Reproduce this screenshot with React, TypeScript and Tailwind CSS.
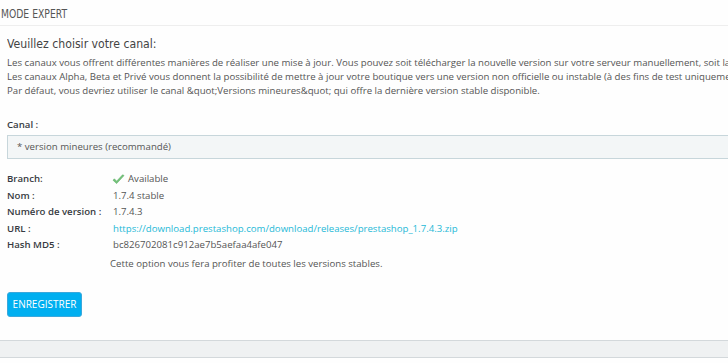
import React from "react";

const rows: { label: string; value: React.ReactNode }[] = [
  {
    label: "Branch:",
    value: (
      <span className="flex items-center gap-[3px]">
        <svg width="13" height="11" viewBox="0 0 13 11" className="-ml-[1px]">
          <path d="M1 6.2 L4.6 9.6 L12 1.6 L10.6 0.8 L4.6 7.2 L2.4 4.8 Z" fill="#72c279" stroke="#5fae66" strokeWidth="0.6" strokeLinejoin="round" />
        </svg>
        Available
      </span>
    ),
  },
  { label: "Nom :", value: "1.7.4 stable" },
  { label: "Numéro de version :", value: "1.7.4.3" },
  {
    label: "URL :",
    value: (
      <a className="text-[#25b9d7]" href="#">
        https://download.prestashop.com/download/releases/prestashop_1.7.4.3.zip
      </a>
    ),
  },
  { label: "Hash MD5 :", value: "bc826702081c912ae7b5aefaa4afe047" },
];

const condensed = { fontFamily: '"DejaVu Sans", sans-serif' };

const App = () => {
  return (
    <div
      className="w-[728px] h-[363px] overflow-hidden bg-[#fefefe] text-[#555] text-[9.65px]"
      style={{ fontFamily: '"Open Sans", "Noto Sans", sans-serif' }}
    >
      <div className="w-[760px]">
        <div className="h-[26px] border-b border-[#eee] pl-[1px] pt-[6px] text-[12px] leading-[16px] text-[#555]" style={condensed}>
          <span className="inline-block origin-left scale-x-[0.77]">MODE EXPERT</span>
        </div>

        <div className="px-[7px]">
          <p className="mt-[10px] text-[12px] leading-[16px] text-[#444]" style={condensed}>
            <span className="inline-block origin-left scale-x-[0.91]">Veuillez choisir votre canal:</span>
          </p>
          <div className="mt-[4px] leading-[14px] whitespace-nowrap">
            <p>
              Les canaux vous offrent différentes manières de réaliser une mise à jour. Vous pouvez soit télécharger la nouvelle version sur votre serveur manuellement, soit laisser le module le faire pour vous.
            </p>
            <p>
              Les canaux Alpha, Beta et Privé vous donnent la possibilité de mettre à jour votre boutique vers une version non officielle ou instable (à des fins de test uniquement).
            </p>
            <p>Par défaut, vous devriez utiliser le canal &amp;quot;Versions mineures&amp;quot; qui offre la dernière version stable disponible.</p>
          </div>

          <p className="mt-[19px] font-semibold text-[#363a41] leading-[16px]">Canal :</p>
          <div className="mt-[2px] h-[24px] border border-r-0 border-[#c7d6db] bg-[#f3f6f7] pl-[9px] flex items-center">
            * version mineures (recommandé)
          </div>

          <div className="mt-[12px] flex flex-col">
            {rows.map((r) => (
              <div key={r.label} className="flex h-[16.6px] items-center">
                <span className="w-[106px] font-semibold text-[#363a41] whitespace-nowrap">{r.label}</span>
                <span className="whitespace-nowrap">{r.value}</span>
              </div>
            ))}
          </div>
          <p className="mt-[3px] pl-[103px] leading-[14px]">Cette option vous fera profiter de toutes les versions stables.</p>

          <button className="mt-[21px] h-[25px] w-[75px] rounded-[3px] border border-[#3aa8dc] bg-[#00aff0] text-white text-[10px] uppercase flex items-center justify-center">
            Enregistrer
          </button>
        </div>

        <div className="mt-[23px] h-[18px] border-y border-[#d3d8db] bg-[#eff1f2]" />
      </div>
    </div>
  );
};

export default App;
